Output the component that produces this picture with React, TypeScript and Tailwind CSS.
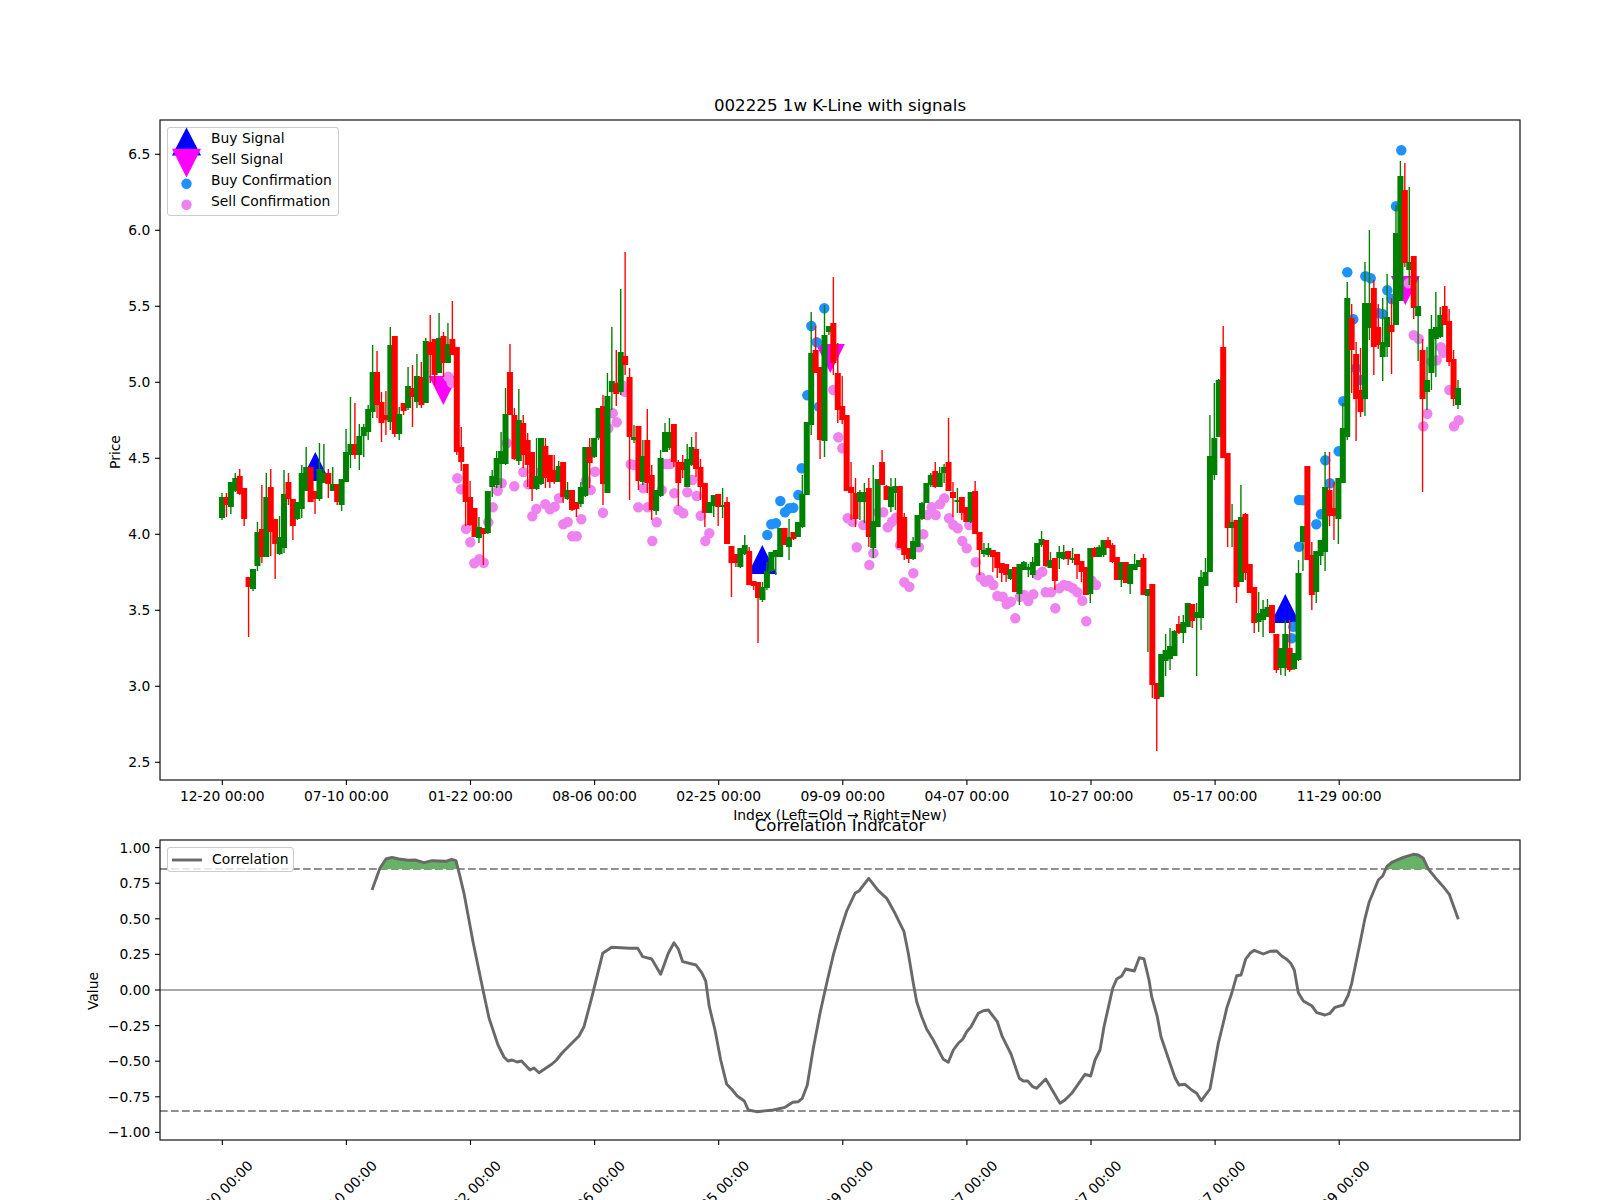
import React from 'react';

type Candle = [string, number, number, number, number]; // colour, high, body top, body bottom, low (page px)

const candles: Candle[] = [
  ['g',493,497,518,520],['r',493,497,505,517],['g',482,482,507,514],['g',473,478,491,492],['r',469,476,494,495],['r',488,488,519,526],
  ['r',577,577,587,637],['g',569,569,589,591],['g',522,532,566,571],['r',485,529,557,563],['g',473,497,557,557],['r',469,487,532,556],
  ['r',519,519,544,579],['g',516,537,554,555],['g',470,494,548,553],['r',473,482,499,505],['r',499,499,526,540],['g',502,502,519,520],
  ['g',465,473,509,518],['g',447,467,491,491],['r',467,467,502,502],['r',491,491,499,514],['g',443,469,499,501],['g',444,473,483,483],
  ['r',469,473,484,498],['g',467,484,491,491],['r',484,484,502,505],['g',479,479,505,511],['g',429,452,482,482],['g',397,444,455,468],
  ['r',403,444,455,459],['g',424,436,455,470],['g',424,427,436,457],['g',405,409,432,440],['g',345,372,412,418],['r',351,372,405,418],
  ['r',392,402,423,442],['r',391,415,420,435],['g',327,345,422,430],['r',336,336,434,437],['g',407,414,434,440],['r',403,403,411,415],
  ['g',367,386,408,410],['r',365,388,397,427],['g',354,376,402,408],['r',362,377,405,408],['g',338,341,403,403],['r',315,342,355,383],
  ['r',339,339,375,385],['g',313,338,373,373],['r',332,336,363,377],['g',323,344,363,363],['r',301,339,355,355],['r',347,347,452,455],
  ['r',427,447,462,471],['r',464,464,502,526],['r',481,497,525,526],['r',508,508,537,537],['g',517,527,538,543],['r',528,528,534,565],
  ['g',491,491,533,534],['g',470,476,487,497],['g',451,458,485,488],['g',432,451,464,488],['g',388,414,464,465],['r',344,372,415,415],
  ['r',408,415,459,460],['g',389,420,461,465],['r',415,423,455,468],['r',433,440,465,487],['r',452,452,489,501],['g',438,476,489,490],
  ['g',438,438,484,485],['r',438,446,478,488],['r',455,455,482,488],['r',455,470,482,484],['g',461,466,482,482],['r',462,462,497,503],
  ['g',482,490,499,500],['r',490,490,510,511],['r',502,502,509,517],['g',482,487,504,507],['g',447,447,496,497],['r',438,447,463,488],
  ['g',438,438,457,458],['g',408,408,438,440],['r',395,406,484,505],['g',373,396,493,493],['g',327,381,392,410],['r',350,383,394,406],
  ['g',289,352,392,395],['r',252,356,365,375],['r',368,377,437,500],['g',425,437,440,443],['r',426,426,481,490],['g',440,456,482,485],
  ['r',409,440,483,493],['r',465,475,510,520],['g',490,490,511,515],['g',450,458,496,497],['g',423,432,452,452],['g',418,432,448,450],
  ['r',424,424,462,467],['r',460,462,483,506],['r',455,462,470,478],['g',444,459,487,487],['g',437,447,465,466],['r',432,449,469,477],
  ['r',459,467,487,500],['r',483,483,513,527],['g',502,502,513,513],['g',495,495,506,517],['r',494,494,507,526],['g',488,505,507,518],
  ['r',497,502,544,544],['r',546,546,563,597],['r',554,554,563,567],['g',548,548,567,568],['g',535,545,554,555],['r',547,551,585,585],
  ['r',581,581,586,590],['r',582,582,598,643],['g',582,587,600,602],['g',562,571,588,590],['g',552,552,571,572],['g',550,550,557,575],
  ['g',528,528,557,557],['r',528,528,545,545],['g',519,537,547,560],['r',532,532,539,540],['g',522,522,537,537],['g',475,494,527,528],
  ['g',422,422,495,495],['g',312,353,425,435],['r',326,350,373,373],['r',367,367,440,459],['g',305,335,441,457],['g',326,326,332,335],
  ['r',277,323,363,375],['r',343,373,410,423],['r',376,406,420,424],['r',415,415,491,491],['r',462,487,493,520],['r',478,493,519,527],
  ['g',490,492,502,520],['g',483,492,502,523],['r',478,488,537,547],['g',465,521,548,558],['g',479,479,527,527],['r',450,462,485,485],
  ['r',485,486,500,500],['g',478,487,507,512],['g',478,486,493,510],['r',486,486,548,548],['r',513,517,555,560],['r',548,548,559,563],
  ['g',537,541,559,560],['g',515,515,547,547],['g',502,503,519,520],['g',483,483,503,503],['g',473,475,485,487],['r',462,471,487,488],
  ['g',467,473,487,487],['g',464,467,473,483],['r',418,462,491,491],['r',482,492,498,517],['g',488,500,502,513],['r',497,497,513,520],
  ['r',507,507,522,522],['g',492,492,522,523],['r',481,491,534,534],['r',532,532,550,575],['g',543,550,554,557],['g',543,548,555,557],
  ['r',550,550,557,572],['r',552,552,568,578],['r',563,563,573,582],['r',564,564,575,582],['g',569,569,579,580],['r',567,567,592,592],
  ['g',564,564,594,605],['g',561,562,570,570],['g',564,567,570,577],['g',557,562,575,578],['g',543,543,566,566],['g',531,539,545,547],
  ['r',540,540,566,567],['g',552,560,568,568],['r',558,558,581,590],['g',546,552,558,569],['g',545,552,559,560],['r',551,551,559,565],
  ['g',548,558,560,563],['r',554,554,565,579],['r',561,561,572,582],['r',567,567,595,595],['g',548,548,594,603],['r',547,548,557,557],
  ['g',545,547,557,557],['g',540,540,555,557],['r',537,540,548,548],['r',543,545,562,563],['r',557,557,580,580],['g',562,562,580,587],
  ['r',562,562,583,583],['g',564,564,584,594],['g',554,564,570,570],['g',560,560,567,567],['r',554,558,595,595],['g',589,589,596,652],
  ['r',584,584,685,698],['r',683,683,699,751],['g',654,654,697,697],['g',634,650,661,676],['g',628,646,659,670],['g',630,631,656,656],
  ['r',616,624,633,634],['g',615,622,633,643],['g',603,603,627,627],['r',604,604,621,628],['g',603,612,618,676],['g',570,577,618,630],
  ['g',558,572,586,586],['g',415,456,572,572],['g',383,438,475,480],['g',379,380,437,437],['r',326,347,458,458],['r',453,453,528,547],
  ['g',504,522,528,547],['r',520,520,587,603],['g',485,517,582,582],['r',513,514,573,580],['r',564,564,593,593],['r',587,587,623,633],
  ['g',592,613,622,632],['g',600,609,620,637],['g',599,607,617,617],['r',605,605,633,633],['r',634,634,670,673],['g',648,648,668,675],
  ['g',620,634,668,676],['r',620,648,670,672],['g',653,653,669,670],['g',560,573,660,661],['g',526,526,542,571],['r',466,466,560,560],
  ['r',542,555,595,610],['g',551,551,592,603],['g',540,540,556,565],['g',452,487,552,571],['r',452,490,516,526],['r',482,508,516,540],
  ['g',478,478,519,544],['g',403,428,483,483],['g',282,298,437,440],['r',304,318,350,393],['r',342,354,399,441],['r',348,390,412,417],
  ['g',262,303,399,416],['g',230,303,328,340],['r',280,288,347,375],['r',304,327,345,349],['g',298,342,357,381],['g',274,317,347,357],
  ['r',298,325,332,374],['g',205,233,325,325],['g',161,176,301,301],['r',163,190,263,267],['g',187,262,270,285],['r',256,256,308,319],
  ['g',277,306,316,361],['r',339,350,399,492],['g',347,380,392,410],['g',315,329,373,390],['g',292,327,339,377],['g',307,315,337,338],
  ['r',286,306,325,325],['r',309,321,362,366],['r',350,359,399,406],['g',380,388,405,409],
];

const sellDots: [number, number][] = [
  [457.3,478.3],[461,489.3],[466,528.7],[470.3,542.3],[474.3,563.3],[479.3,559.3],[483.7,562.7],[492.7,507.3],[488.3,522.3],[497.7,490.7],
  [501.7,483.3],[506.7,443.3],[514.3,486.3],[523.3,472],[528.3,484.3],[532.3,516.3],[536.3,509],[545.3,504.3],[550,509.3],[554.7,506.7],
  [559,498.3],[563.3,524.3],[567.7,522],[572.3,536.3],[576.7,536.3],[581.3,519.3],[585.7,480.7],[590.7,490],[595,471.7],[541,471.7],
  [603,512.7],[448.3,376.7],[451.7,382.7],[612.7,413.3],[616.7,422.3],[608.3,428.3],[621.7,385],[625,391.7],[630.7,464.3],[634.3,465],
  [638.3,507.3],[647.7,507.3],[652.3,541],[656.7,522.3],[643.3,488.3],[661.7,490],[665.7,464],[670,464],[674.3,493.3],[678.3,510],
  [683.3,513.3],[687.3,492.3],[692.3,480],[696.7,496],[700.7,515.7],[705.3,541],[709.3,533.3],[833.3,390],[838.3,437.3],[842.3,448.3],
  [847.7,518.3],[852.3,521.7],[856.7,547.3],[863.3,525],[869.3,565],[873.3,553.3],[878.3,512.3],[883.3,512.3],[887.7,527.3],[892,521.7],
  [896,517.7],[900,545.3],[904.3,582.3],[909.3,586.7],[913.3,573.3],[919,547.3],[923.3,534.3],[927.3,515],[931.7,507.3],[935.7,515],
  [940,504.3],[944.3,498.3],[949,518.3],[953.3,525],[957.7,528.3],[962.3,541],[966.7,548.3],[969.3,525],[975.7,562.3],[980.7,577.3],
  [985,581.7],[989,580],[993.3,585],[997.3,596],[1002.7,596.7],[1006.7,604.3],[1011,601.7],[1015.3,618.3],[1020,596.7],[1024,595],
  [1028.3,601],[1033.3,594.3],[1037.7,575],[1042.3,571.7],[1045.7,592.3],[1051,592.3],[1055.3,608.3],[1059.3,588.3],[1064,585],[1068.3,586],
  [1072.7,588.3],[1077.3,592.3],[1082.3,600.7],[1086.3,621.3],[1091.7,580.7],[1096,585],[1408.7,283.3],[1413.7,335.3],[1418.7,338.7],
  [1441,347.3],[1443.3,352.7],[1436.7,360.3],[1431.7,361.7],[1449.3,390],[1427.3,413.7],[1423.3,426.3],[1454,426.3],[1458.7,420.3],
];

const buyDots: [number, number][] = [
  [811.3,326],[816.7,342.3],[824.3,308.3],[807.3,395.3],[819,406.7],[801.7,468.3],[798.3,495],[793.3,507.7],[789.3,508.3],[785,512.3],
  [780.3,501],[776,523.3],[771.3,524.3],[767.3,535],[1299,546.7],[1299,500],[1293.3,626.7],[1291.7,638.3],[1401.3,150.3],[1396,206.3],
  [1347.3,272.3],[1365.3,276.3],[1370.7,278.3],[1387.3,290.3],[1391.7,299],[1382.7,314],[1378.3,313.3],[1353.3,319.3],[1356,368.3],
  [1361,380],[1343.3,401.3],[1338.7,451.3],[1325.3,460.3],[1330,483.3],[1303,500.3],[1321,514.3],[1316.3,524.3],
];

const corr: [number, number][] = [
  [372,890],[380,868],[386,859],[392,857.3],[399,859],[408,860.3],[415,860],[424,862.7],[432,860.7],[446,861.3],[451.5,859.3],[456,860.7],
  [460,876.7],[464,893.3],[473,941.7],[483,990],[489,1018],[498,1045],[504,1057],[508,1061],[512,1060],[517,1062],[521.5,1061],[530,1070],
  [534,1068],[539,1072.7],[552,1064],[556.5,1060],[562,1053],[571,1044],[579,1036],[584,1026.7],[592,996.7],[602.7,953.3],[611.7,947.3],
  [630,948.3],[637.7,948.3],[642.7,956.7],[651.7,959],[660.7,974.3],[668.3,953.3],[674,942.7],[678.3,949],[682.7,961.7],[696,965],
  [701.7,972.7],[705.7,981],[709.3,1006.7],[715,1030],[720.7,1060],[726.7,1084.3],[731.7,1089.3],[737.3,1096],[744.3,1101],[748.3,1110],
  [756.7,1111.7],[773.3,1110],[785,1107.3],[792.7,1102.3],[798.3,1101.7],[802.3,1098.3],[807.3,1085],[813.3,1048.3],[820,1013.3],[826.7,983.3],
  [833.3,955],[840,931.7],[846.7,911],[855,893.3],[859.3,890.7],[868.7,878.3],[878.3,890.7],[886.7,898.3],[895,913.3],[904,931.7],
  [908.3,953.3],[913.3,983.3],[916.7,1001.7],[921.7,1016.7],[926.7,1029.3],[933.3,1040],[943.3,1059.3],[948.3,1062.3],[953.3,1050],[958.3,1043.3],
  [962.7,1039.3],[966.7,1031.7],[971,1026.7],[978.3,1013.3],[983.3,1010.7],[988.3,1010],[997.3,1021.7],[1002.3,1036.7],[1011,1054],[1019.3,1078.3],
  [1023.3,1081],[1027.7,1081],[1032.7,1086.7],[1036.7,1088.3],[1045.7,1079],[1060,1103.3],[1065,1100],[1071.7,1093.3],[1085,1074.3],[1090.7,1076],
  [1095,1060],[1100,1050],[1104,1026.7],[1112.7,988.3],[1116.7,979],[1121.7,976],[1125.7,969],[1134.3,971],[1139.3,957.7],[1144,959],
  [1149,980],[1151.7,996.7],[1157.3,1016.7],[1161,1036.7],[1170,1063.3],[1175,1077.7],[1179,1085],[1185,1084.3],[1191.7,1090],[1196.7,1093.3],
  [1201.3,1100.7],[1210,1089],[1218.3,1043.3],[1224,1020],[1226.7,1008.3],[1231.7,993.3],[1236.7,975.7],[1241,975],[1245.7,959],[1250,953.3],
  [1254.3,950.3],[1263.3,954],[1270,951.3],[1276.7,951],[1281.7,956],[1286.7,959.3],[1290.7,963.3],[1294.3,970],[1298.3,992.7],[1303.3,1001],
  [1311.7,1005.7],[1316.7,1012.7],[1325,1015],[1330,1013.3],[1335,1007.3],[1343.3,1005],[1348.3,995],[1351.7,983.3],[1360,943.3],[1365,918.3],
  [1369.3,901.7],[1378.3,880],[1382.7,876],[1386.7,866.7],[1391.7,862.3],[1403.3,857.3],[1413.3,854.3],[1418.3,855],[1423.3,858.3],[1428.3,869],
  [1436.7,879.3],[1443.3,886.7],[1449.3,894.3],[1458.3,919.3],
];

const dates = ['12-20 00:00', '07-10 00:00', '01-22 00:00', '08-06 00:00', '02-25 00:00', '09-09 00:00', '04-07 00:00', '10-27 00:00', '05-17 00:00', '11-29 00:00'];
const tickX = (i: number) => 222.3 + 124.1 * i;
const FONT = 13.89;

const pts = (list: [number, number][]) => list.map(p => p.join(',')).join(' ');

// region above the +0.85 guide, closed along the guide
const above = (from: number, to: number) =>
  `${from},869 ${pts(corr.filter(([x, y]) => x >= from && x <= to && y <= 869))} ${to},869`;

const Up = ({ x, top }: { x: number; top: number }) => (
  <polygon points={`${x},${top} ${x + 14.5},${top + 29} ${x - 14.5},${top + 29}`} fill="#0000ff" />
);
const Down = ({ x, top }: { x: number; top: number }) => (
  <polygon points={`${x - 14.5},${top} ${x + 14.5},${top} ${x},${top + 29}`} fill="#ff00ff" />
);

const Frame = ({ x, y, w, h }: { x: number; y: number; w: number; h: number }) => (
  <rect x={x} y={y} width={w} height={h} fill="none" stroke="#000" strokeWidth={1.11} />
);

const YTick = ({ y, label, x = 160 }: { y: number; label: string; x?: number }) => (
  <g>
    <line x1={x - 4.9} x2={x} y1={y} y2={y} stroke="#000" strokeWidth={1.11} />
    <text x={x - 9.7} y={y} fontSize={FONT} textAnchor="end" dominantBaseline="central" fill="#000">{label}</text>
  </g>
);

const PriceChart = () => (
  <svg viewBox="160 120 1360 660" width={1360} height={660} className="block overflow-visible">
    <Up x={315.3} top={452} />
    <Up x={762.3} top={545} />
    <Up x={1285.3} top={594} />
    <Down x={443.3} top={376} />
    <Down x={830.3} top={344} />
    <Down x={1405.3} top={276} />
    {buyDots.map(([x, y], i) => <circle key={i} cx={x} cy={y} r={5.2} fill="#1e90ff" />)}
    {sellDots.map(([x, y], i) => <circle key={i} cx={x} cy={y} r={5.2} fill="#ee82ee" />)}
    {candles.map(([c, h, t, b, l], i) => {
      const x = 222 + (1236 / 279) * i;
      const col = c === 'g' ? '#008000' : '#ff0000';
      return (
        <g key={i}>
          <line x1={x} x2={x} y1={h} y2={l} stroke={col} strokeWidth={1.39} />
          <rect x={x - 3} y={t} width={6} height={b - t} fill={col} />
        </g>
      );
    })}
    <Frame x={160} y={120} w={1360} h={660} />
    {['6.5', '6.0', '5.5', '5.0', '4.5', '4.0', '3.5', '3.0', '2.5'].map((v, i) => (
      <YTick key={v} y={154.3 + 76 * i} label={v} />
    ))}
    {dates.map((d, i) => (
      <g key={d}>
        <line x1={tickX(i)} x2={tickX(i)} y1={780} y2={784.9} stroke="#000" strokeWidth={1.11} />
        <text x={tickX(i)} y={801} fontSize={FONT} textAnchor="middle" fill="#000">{d}</text>
      </g>
    ))}
    <text x={840} y={820} fontSize={FONT} textAnchor="middle" fill="#000">Index (Left=Old → Right=New)</text>
    <text x={115} y={452} fontSize={FONT} textAnchor="middle" dominantBaseline="central" transform="rotate(-90 115 452)" fill="#000">Price</text>
  </svg>
);

const CorrChart = () => (
  <svg viewBox="160 840 1360 300" width={1360} height={300} className="block overflow-visible">
    <line x1={160} x2={1520} y1={990} y2={990} stroke="#a9a9a9" strokeWidth={2.08} />
    <line x1={160} x2={1520} y1={869} y2={869} stroke="#909090" strokeWidth={2.08} strokeDasharray="7.7 3.3" />
    <line x1={160} x2={1520} y1={1111} y2={1111} stroke="#909090" strokeWidth={2.08} strokeDasharray="7.7 3.3" />
    <polygon points={above(380, 458.5)} fill="#66b366" />
    <polygon points={above(1386, 1428.3)} fill="#66b366" />
    <polyline points={pts(corr)} fill="none" stroke="#696969" strokeWidth={2.9} strokeLinejoin="round" />
    <Frame x={160} y={840} w={1360} h={300} />
    {['1.00', '0.75', '0.50', '0.25', '0.00', '−0.25', '−0.50', '−0.75', '−1.00'].map((v, i) => (
      <YTick key={v} y={847.6 + 35.6 * i} label={v} />
    ))}
    {dates.map((d, i) => (
      <g key={d}>
        <line x1={tickX(i)} x2={tickX(i)} y1={1140} y2={1144.9} stroke="#000" strokeWidth={1.11} />
        <text x={tickX(i) - 2} y={1193} fontSize={FONT} textAnchor="middle" dominantBaseline="central" transform={`rotate(-45 ${tickX(i) - 2} 1193)`} fill="#000">{d}</text>
      </g>
    ))}
    <text x={93} y={991} fontSize={FONT} textAnchor="middle" dominantBaseline="central" transform="rotate(-90 93 991)" fill="#000">Value</text>
  </svg>
);

const LegendRow = ({ label, children }: { label: string; children: React.ReactNode }) => (
  <div className="flex items-center h-[21px]">
    <svg width={29} height={21} className="ml-[4px] overflow-visible shrink-0">{children}</svg>
    <span className="ml-[10px] text-[13.89px] whitespace-nowrap text-black">{label}</span>
  </div>
);

export default function App() {
  return (
    <div className="w-[1600px] h-[1200px] overflow-hidden bg-white font-['DejaVu_Sans',sans-serif]">
      <div className="pt-[95px]">
        <h2 className="h-[25px] ml-[160px] w-[1360px] text-center text-[16.67px] leading-[22px] font-normal text-black">002225 1w K-Line with signals</h2>
        <div className="relative ml-[160px] w-[1360px] h-[660px]">
          <PriceChart />
          <div className="absolute left-[7px] top-[7px] w-[172px] h-[89px] border border-[#cccccc] rounded-[3px] bg-white/80">
            <LegendRow label="Buy Signal">
              <polygon points="14.5,-0.5 29,27.5 0,27.5" fill="#0000ff" />
            </LegendRow>
            <LegendRow label="Sell Signal">
              <polygon points="0,-0.2 29,-0.2 14.5,28.5" fill="#ff00ff" />
            </LegendRow>
            <LegendRow label="Buy Confirmation">
              <circle cx={14.5} cy={13.8} r={5.2} fill="#1e90ff" />
            </LegendRow>
            <LegendRow label="Sell Confirmation">
              <circle cx={14.5} cy={13.8} r={5.2} fill="#ee82ee" />
            </LegendRow>
          </div>
        </div>
        <h2 className="mt-[35px] h-[25px] ml-[160px] w-[1360px] text-center text-[16.67px] leading-[22px] font-normal text-black">Correlation Indicator</h2>
        <div className="relative ml-[160px] w-[1360px] h-[300px]">
          <CorrChart />
          <div className="absolute left-[7px] top-[7px] w-[127px] h-[25px] flex items-center border border-[#cccccc] rounded-[3px] bg-white/80">
            <svg width={30} height={4} className="ml-[4px] shrink-0">
              <line x1={0} x2={30} y1={2} y2={2} stroke="#696969" strokeWidth={2.9} />
            </svg>
            <span className="ml-[10px] text-[13.89px] text-black">Correlation</span>
          </div>
        </div>
      </div>
    </div>
  );
}
